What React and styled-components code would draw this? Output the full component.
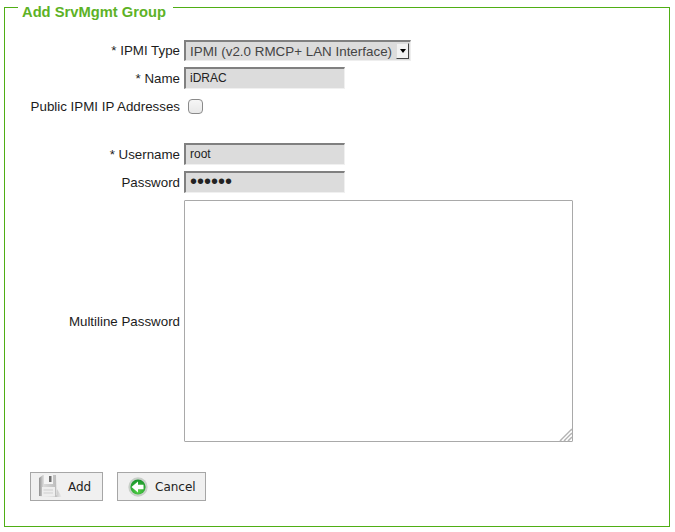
import React from 'react';
import styled, { createGlobalStyle } from 'styled-components';

const Global = createGlobalStyle`
  html, body { margin: 0; padding: 0; background: #fff; }
  body { font-family: "Liberation Sans", Arial, sans-serif; font-size: 13.33px; color: #222; }
`;
const Page = styled.div`
  width: 675px; height: 532px; box-sizing: border-box; padding: 1px 5px 5px 4px; overflow: hidden;
`;
const Field = styled.fieldset`
  margin: 0; box-sizing: border-box; width: 666px; height: 526px;
  border: 1px solid #4fae14; padding: 0; min-inline-size: 0;
`;
const Legend = styled.legend`
  margin-left: 13px; padding: 10px 7px 0 4px; color: #5db226; font-size: 14.72px; font-weight: bold; line-height: 2px;
`;
const Form = styled.div`
  display: grid; grid-template-columns: 175px auto; column-gap: 4px; justify-content: start; align-items: center;
  padding-top: 27px; row-gap: 6px;
`;
const Label = styled.label`
  text-align: right; white-space: nowrap; font-size: 13.33px; color: #1c1c1c; line-height: 15px;
  padding-top: ${p => p.$pt || 0}px;
`;
const Cell = styled.div`
  display: flex; align-items: ${p => p.$align || 'center'}; height: ${p => p.$h || 22}px;
`;
const Spacer = styled.div`
  grid-column: 1 / -1; height: 14px;
`;
const Select = styled.div`
  box-sizing: border-box; width: 227px; height: 21px; display: flex; align-items: center; justify-content: space-between;
  background: #dcdcdc; border-style: solid; border-width: 2px 1px 1px 2px;
  border-color: #808080 #eee #eee #808080; padding: 0 1px 0 4px; color: #444; font-size: 13.4px;
`;
const Arrow = styled.span`
  box-sizing: border-box; width: 13px; height: 16px; background: #f2f2f2; border: 1px solid #444; border-top-color: #ddd; border-left-color: #ddd;
  display: flex; align-items: center; justify-content: center;
  &::after { content: ""; border: 3px solid transparent; border-top: 4px solid #000; border-bottom: 0; }
`;
const Input = styled.input`
  box-sizing: border-box; width: 161px; height: 22px; background: #dcdcdc; font: ${p => p.$size || 12}px "Liberation Sans", Arial, sans-serif; color: #222;
  border-style: solid; border-width: 2px 1px 1px 2px; border-color: #808080 #f0f0f0 #f0f0f0 #808080; padding: 0 4px 2px; margin: 0; outline: none;
`;
const Check = styled.span`
  box-sizing: border-box; display: block; width: 15px; height: 15px; border: 1px solid #8a8a8a; border-radius: 4px;
  background: linear-gradient(#f6f6f6, #e8e8e8); margin-left: 4px;
`;
const AreaWrap = styled.div`
  position: relative; width: 389px; height: 242px;
`;
const Area = styled.textarea`
  box-sizing: border-box; display: block; width: 100%; height: 100%; border: 1px solid #a9a9a9; border-radius: 1px; background: #fff; margin: 0; padding: 2px; resize: none; outline: none;
`;
const Grip = styled.svg`
  position: absolute; right: 0; bottom: 0;
`;
const Buttons = styled.div`
  display: flex; gap: 14px; padding: 30px 0 0 25px;
`;
const Button = styled.button`
  box-sizing: border-box; height: 29px; width: ${p => p.$w}px; display: flex; align-items: center; gap: ${p => p.$gap}px; padding: 0 0 0 ${p => p.$pl}px;
  background: #f0f0f0; border: 1px solid #a6a6a6; font: 12px "DejaVu Sans", sans-serif; color: #222; margin: 0;
`;

const Disk = () => (
  <svg width="24" height="25" viewBox="0 0 24 25">
    <defs>
      <linearGradient id="diskBody" x1="0" y1="0" x2="1" y2="0">
        <stop offset="0" stopColor="#8f8f8f" />
        <stop offset="0.25" stopColor="#dadada" />
        <stop offset="1" stopColor="#bcbcbc" />
      </linearGradient>
      <linearGradient id="diskShadow" x1="0" y1="0" x2="1" y2="0">
        <stop offset="0" stopColor="#b0b0b0" />
        <stop offset="1" stopColor="#f0f0f0" />
      </linearGradient>
    </defs>
    <path d="M15 23 H24 L19 15 V21 Z" fill="url(#diskShadow)" />
    <path d="M1 4 L5 1 H18 L18.5 23 L1 22 Z" fill="url(#diskBody)" />
    <path d="M6 1 H15 V10 H6 Z" fill="#f4f4f4" />
    <rect x="11" y="2" width="2.5" height="6" fill="#6f6f6f" />
    <path d="M4 13 H17 V22.5 H4 Z" fill="#eeeeee" />
    <path d="M5.5 16 H15 M5.5 19 H15" stroke="#cfcfcf" />
  </svg>
);
const Back = () => (
  <svg width="20" height="20" viewBox="0 0 20 20">
    <defs>
      <radialGradient id="backFill" cx="0.5" cy="0.75" r="0.75">
        <stop offset="0" stopColor="#55d047" />
        <stop offset="1" stopColor="#16932a" />
      </radialGradient>
    </defs>
    <circle cx="10" cy="10" r="9.7" fill="#c8cfc8" />
    <circle cx="10" cy="10" r="7.6" fill="url(#backFill)" />
    <path d="M3.5 10 L10 4.5 V7.8 H15.5 V12.2 H10 V15.5 Z" fill="#fff" />
  </svg>
);

export default function App() {
  return (
    <Page>
      <Global />
      <Field>
        <Legend>Add SrvMgmt Group</Legend>
        <Form>
          <Label>* IPMI Type</Label>
          <Cell $h={21}><Select>IPMI (v2.0 RMCP+ LAN Interface)<Arrow /></Select></Cell>
          <Label>* Name</Label>
          <Cell><Input readOnly value="iDRAC" /></Cell>
          <Label>Public IPMI IP Addresses</Label>
          <Cell><Check /></Cell>
          <Spacer />
          <Label>* Username</Label>
          <Cell><Input readOnly value="root" /></Cell>
          <Label>Password</Label>
          <Cell><Input readOnly type="password" value="secret" $size={20} /></Cell>
          <Label $pt={2}>Multiline Password</Label>
          <Cell $h={243} $align="flex-end">
            <AreaWrap>
              <Area readOnly />
              <Grip width="14" height="14" viewBox="0 0 14 14">
                <path d="M1 13 L13 1 M5 13 L13 5 M9 13 L13 9" stroke="#b4b4b4" strokeWidth="1.6" fill="none" />
                <path d="M3 12 L12 3 M7 12 L12 7" stroke="#e4e4e4" strokeWidth="1" fill="none" />
              </Grip>
            </AreaWrap>
          </Cell>
        </Form>
        <Buttons>
          <Button $w={73} $gap={6} $pl={7}><Disk />Add</Button>
          <Button $w={89} $gap={7} $pl={10}><Back />Cancel</Button>
        </Buttons>
      </Field>
    </Page>
  );
}
